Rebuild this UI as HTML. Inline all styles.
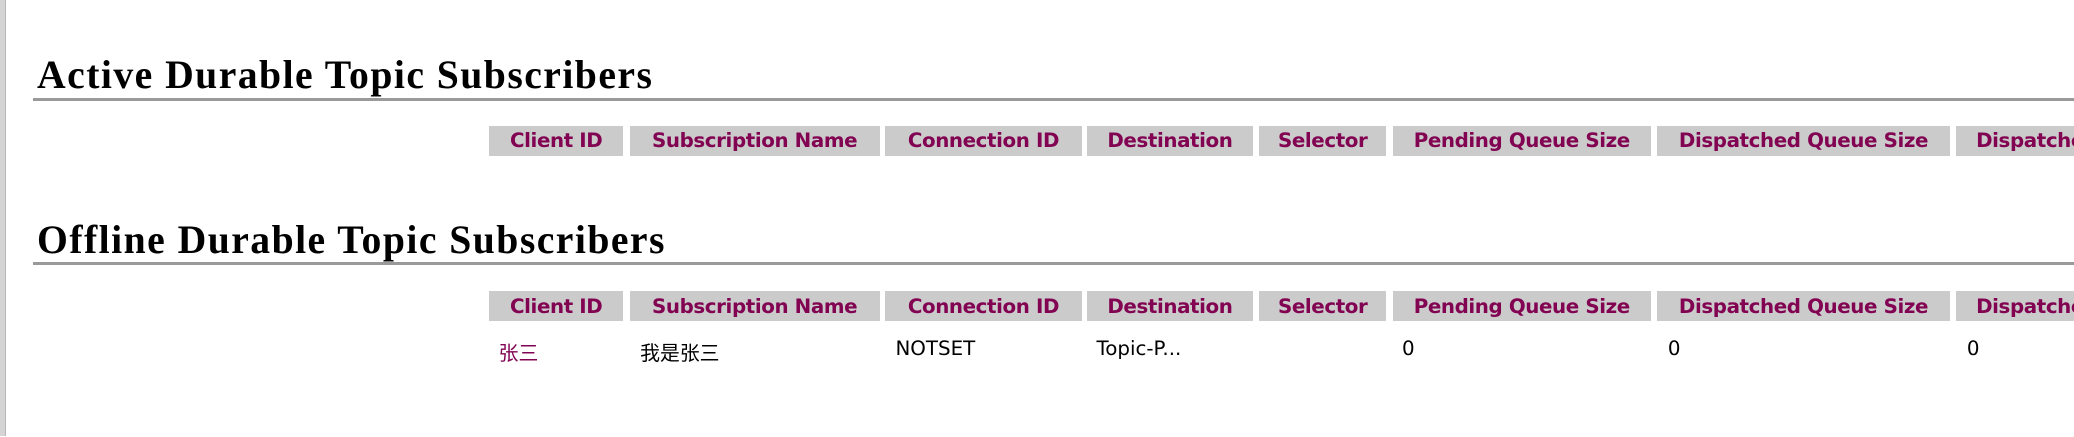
<!DOCTYPE html>
<html><head><meta charset="utf-8"><style>
html,body{margin:0;padding:0;background:#fff;}
body{width:2074px;height:437px;overflow:hidden;position:relative;}
#w{position:absolute;left:0;top:0;width:1568px;height:330px;zoom:1.32270;}
.lb{position:absolute;left:0;top:0;width:4px;height:330px;background:#d4d4d4;border-right:1px solid #b8b8b8;}
h2{position:absolute;left:28px;margin:0;font:bold 30px "Liberation Serif",serif;letter-spacing:1.1px;color:#000;line-height:34px;}
.hr{position:absolute;left:25px;right:0;height:2px;background:#9a9a9a;}
.th{position:absolute;height:23px;background:#cbcbcb;color:#810351;font:bold 15px "DejaVu Sans",Verdana,sans-serif;display:flex;align-items:center;justify-content:center;white-space:nowrap;overflow:hidden;letter-spacing:-0.3px;}
.td{position:absolute;font:15px "DejaVu Sans","Noto Sans CJK SC",sans-serif;color:#000;white-space:nowrap;}
</style></head><body><div id="w">
<div class="lb"></div>
<h2 style="top:40px">Active Durable Topic Subscribers</h2>
<div class="hr" style="top:74px"></div>
<div class="th" style="top:95px;left:370px;width:101px">Client ID</div>
<div class="th" style="top:95px;left:476px;width:189px">Subscription Name</div>
<div class="th" style="top:95px;left:669px;width:149px">Connection ID</div>
<div class="th" style="top:95px;left:822px;width:125px">Destination</div>
<div class="th" style="top:95px;left:952px;width:96px">Selector</div>
<div class="th" style="top:95px;left:1053px;width:195px">Pending Queue Size</div>
<div class="th" style="top:95px;left:1253px;width:221px">Dispatched Queue Size</div>
<div class="th" style="top:95px;left:1479px;width:89px;justify-content:flex-start;padding-left:15px;box-sizing:border-box">Dispatched Counter</div>

<h2 style="top:165px">Offline Durable Topic Subscribers</h2>
<div class="hr" style="top:198px"></div>
<div class="th" style="top:220px;left:370px;width:101px">Client ID</div>
<div class="th" style="top:220px;left:476px;width:189px">Subscription Name</div>
<div class="th" style="top:220px;left:669px;width:149px">Connection ID</div>
<div class="th" style="top:220px;left:822px;width:125px">Destination</div>
<div class="th" style="top:220px;left:952px;width:96px">Selector</div>
<div class="th" style="top:220px;left:1053px;width:195px">Pending Queue Size</div>
<div class="th" style="top:220px;left:1253px;width:221px">Dispatched Queue Size</div>
<div class="th" style="top:220px;left:1479px;width:89px;justify-content:flex-start;padding-left:15px;box-sizing:border-box">Dispatched Counter</div>

<div class="td" style="top:255px;left:377px;color:#810351">张三</div>
<div class="td" style="top:255px;left:484px">我是张三</div>
<div class="td" style="top:255px;left:677px">NOTSET</div>
<div class="td" style="top:255px;left:829px">Topic-P...</div>
<div class="td" style="top:255px;left:1060px">0</div>
<div class="td" style="top:255px;left:1261px">0</div>
<div class="td" style="top:255px;left:1487px">0</div>
</div></body></html>
